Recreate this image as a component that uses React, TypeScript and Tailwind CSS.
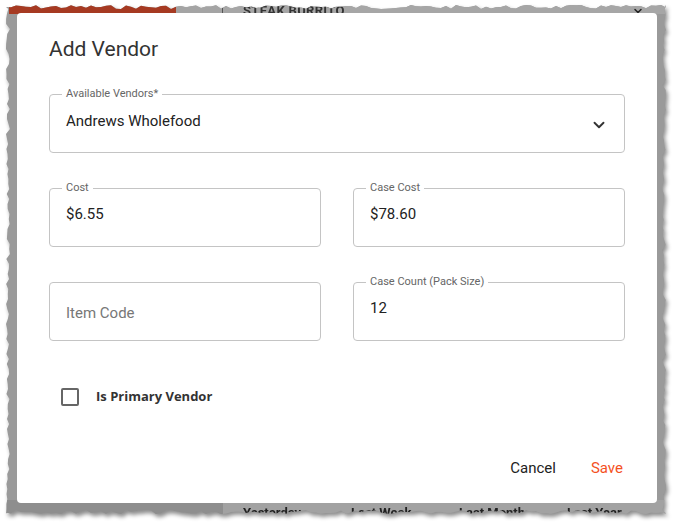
import { ChevronDown } from 'lucide-react';

const Field = ({ label, value }: { label?: string; value: string }) => {
    return (
        <div className="relative h-[59px] rounded-[4px] border border-[#c4c4c4]">
            {label ? (
                <span className="absolute -top-[8px] left-[12px] bg-white px-[4px] text-[11px] leading-[14px] text-[#666]">
                    {label}
                </span>
            ) : (
                ''
            )}
            {label ? (
                <div className="pl-4 pt-[15px] text-[15px] leading-[20px] text-[#222]">
                    {value}
                </div>
            ) : (
                <div className="flex h-full items-center pl-4 pt-[4px] text-[15px] text-[#777]">
                    {value}
                </div>
            )}
        </div>
    );
};

// torn paper edge for the screenshot frame
const tornEdge = () => {
    const w = 660;
    const h = 509;
    let seed = 7;
    const rnd = () => {
        seed = (seed * 9301 + 49297) % 233280;
        return seed / 233280;
    };
    const pts: string[] = [];
    for (let x = 0; x <= w; x += 5) pts.push(`${x}px ${(rnd() * 4).toFixed(1)}px`);
    for (let y = 0; y <= h; y += 5) pts.push(`${(w - rnd() * 4).toFixed(1)}px ${y}px`);
    for (let x = w; x >= 0; x -= 5) pts.push(`${x}px ${(h - rnd() * 4).toFixed(1)}px`);
    for (let y = h; y >= 0; y -= 5) pts.push(`${(rnd() * 4).toFixed(1)}px ${y}px`);
    return `polygon(${pts.join(', ')})`;
};

const App = () => {
    return (
        <div
            className="h-[524px] w-[678px] overflow-hidden bg-white pl-[6px] pt-[5px]"
            style={{ fontFamily: 'Roboto, "Liberation Sans", sans-serif' }}
        >
            <div className="h-[511px] w-[662px] drop-shadow-[2px_3px_2px_rgba(0,0,0,0.45)]">
                <div
                    className="relative h-[509px] w-[660px] overflow-hidden bg-[#9a9a9a]"
                    style={{ clipPath: tornEdge() }}
                >
                    {/* page behind the dialog */}
                    <div className="flex h-[9px] flex-row">
                        <div className="ml-[3px] w-[167px] bg-[#a63a22]" />
                        <div className="w-[46px] bg-[#a4a4a4]" />
                        <div className="w-[1px] bg-[#555]" />
                        <div className="relative flex-1 bg-[#a6a6a6]">
                            <span className="absolute left-[20px] -top-[1px] text-[13px] font-bold leading-[14px] tracking-wide text-[#333]">
                                STEAK BURRITO
                            </span>
                            <ChevronDown
                                size={12}
                                strokeWidth={3}
                                className="absolute right-[22px] top-[0px] text-[#222]"
                            />
                        </div>
                    </div>
                    <div className="absolute bottom-0 left-0 flex h-[14px] w-full flex-row">
                        <div className="w-[217px] bg-[#8e8e8e]" />
                        <div className="relative flex-1 bg-[#a2a2a2]">
                            <span className="absolute left-[20px] -bottom-[8px] text-[13px] font-bold text-[#222]">
                                Yesterday
                            </span>
                            <span className="absolute left-[128px] -bottom-[8px] text-[13px] font-bold text-[#222]">
                                Last Week
                            </span>
                            <span className="absolute left-[236px] -bottom-[8px] text-[13px] font-bold text-[#222]">
                                Last Month
                            </span>
                            <span className="absolute left-[344px] -bottom-[8px] text-[13px] font-bold text-[#222]">
                                Last Year
                            </span>
                        </div>
                    </div>

                    {/* dialog */}
                    <div className="absolute left-[11px] top-[8px] flex h-[490px] w-[640px] flex-col rounded-[4px] bg-white px-8 pt-[22px]">
                        <h1 className="text-[21px] leading-[28px] text-[#333]">
                            Add Vendor
                        </h1>
                        <div className="relative mt-[31px] h-[59px] rounded-[4px] border border-[#c4c4c4]">
                            <span className="absolute -top-[8px] left-[12px] bg-white px-[4px] text-[11px] leading-[14px] text-[#666]">
                                Available Vendors*
                            </span>
                            <div className="flex flex-row items-center pl-4 pr-4 pt-[13px] text-[15px] leading-[20px] text-[#222]">
                                Andrews Wholefood
                                <ChevronDown
                                    size={18}
                                    strokeWidth={2.5}
                                    className="ms-auto mt-[8px] text-[#333]"
                                />
                            </div>
                        </div>
                        <div className="mt-[35px] grid grid-cols-2 gap-x-8 gap-y-[35px]">
                            <Field label="Cost" value="$6.55" />
                            <Field label="Case Cost" value="$78.60" />
                            <Field value="Item Code" />
                            <Field label="Case Count (Pack Size)" value="12" />
                        </div>
                        <div className="mt-[46px] flex flex-row items-center pl-3">
                            <div className="h-[18px] w-[18px] rounded-[2px] border-2 border-[#666]" />
                            <span
                                className="ml-[17px] text-[13px] font-bold text-[#333]"
                                style={{ fontFamily: '"Open Sans", Lato, sans-serif' }}
                            >
                                Is Primary Vendor
                            </span>
                        </div>
                        <div className="mt-auto mb-[25px] flex flex-row justify-end gap-[35px] pr-[2px] text-[15px] leading-[20px]">
                            <button className="text-[#222]">Cancel</button>
                            <button className="text-[#f4511e]">Save</button>
                        </div>
                    </div>
                </div>
            </div>
        </div>
    );
};

export default App;
